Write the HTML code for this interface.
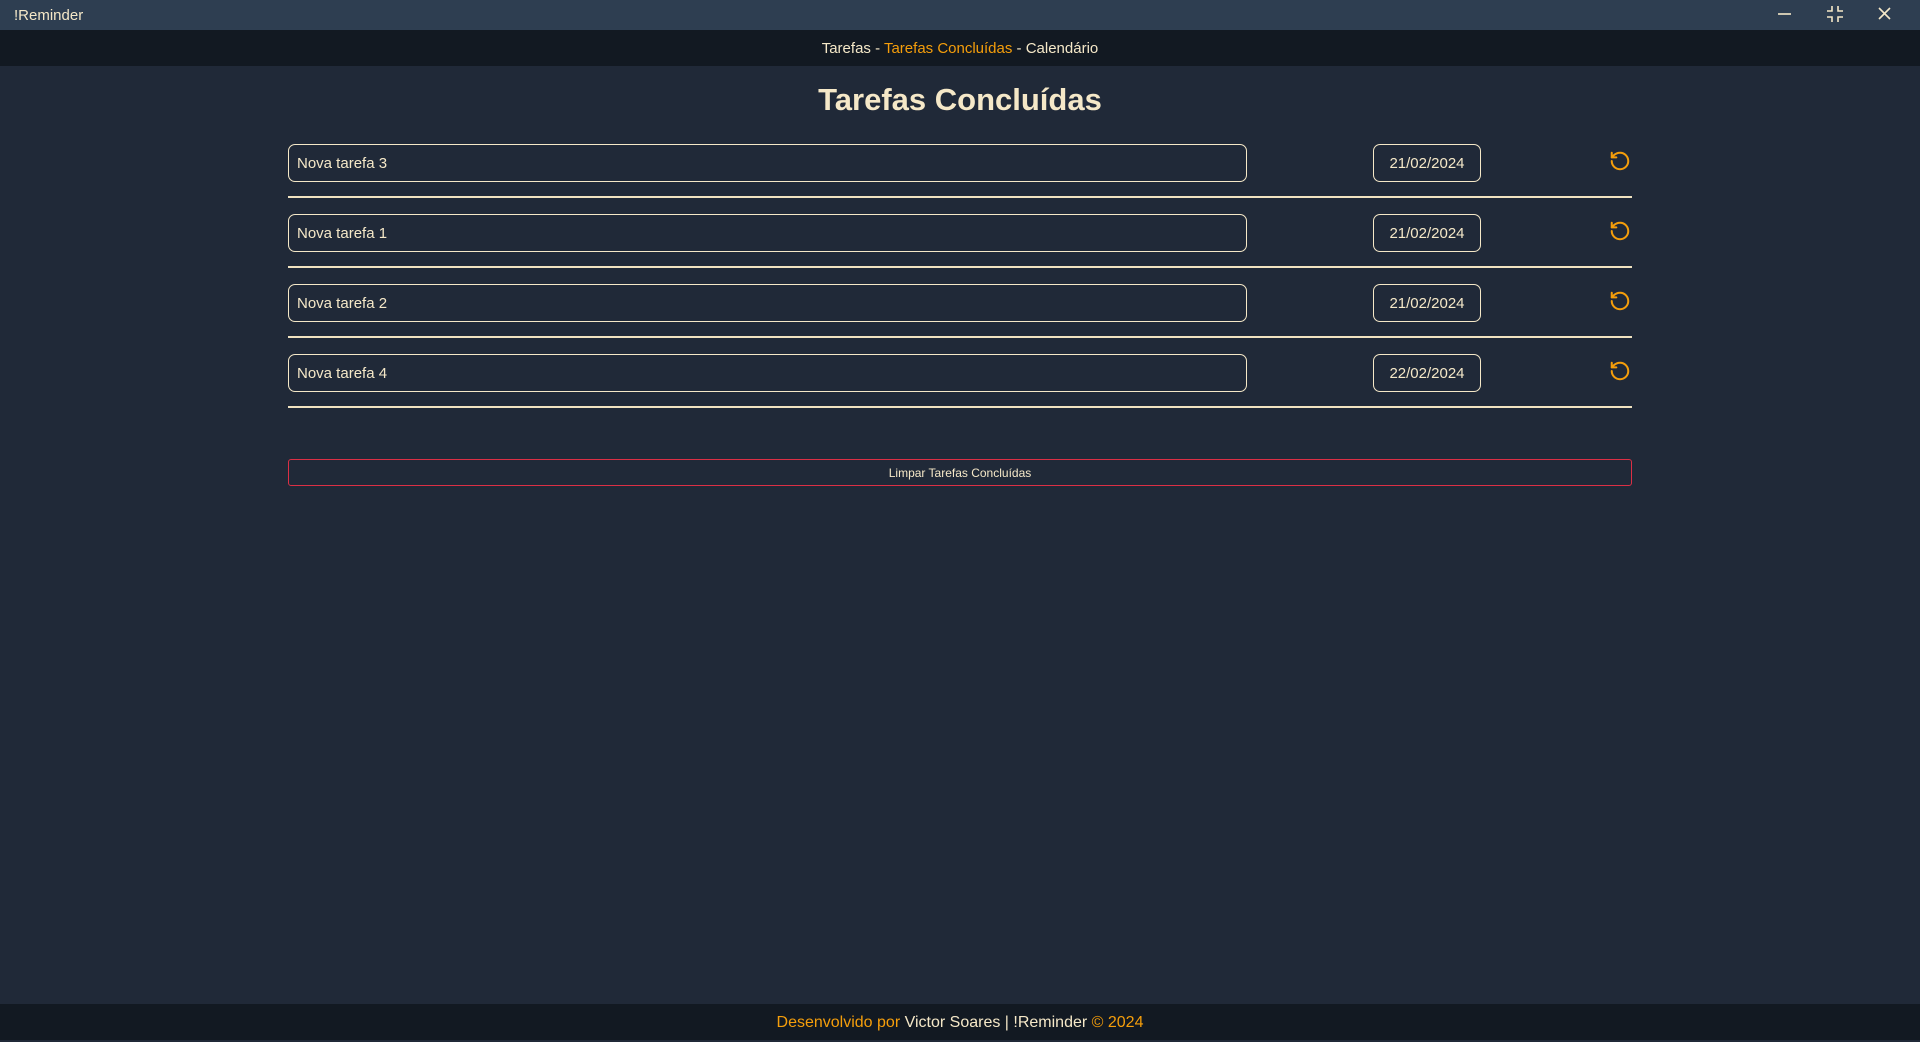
<!DOCTYPE html>
<html><head><meta charset="utf-8"><style>
*{margin:0;padding:0;box-sizing:border-box}
body{width:1920px;height:1040px;background:#202938;font-family:"Liberation Sans",sans-serif;color:#f5e8c8;position:relative;overflow:hidden}
.tb{position:absolute;left:0;top:0;width:1920px;height:30px;background:#2e3e51}
.tb .t{position:absolute;left:14px;top:7px;font-size:15px}
.nav{position:absolute;left:0;top:30px;width:1920px;height:36px;background:#121922;text-align:center;font-size:15px;line-height:38px}
.o{color:#f59e0b}
h1{position:absolute;top:82px;width:1920px;text-align:center;font-size:31px;font-weight:bold}
.in{position:absolute;left:288px;width:959px;height:38px;border:1.5px solid #f5e8c8;border-radius:7px;font-size:15px;line-height:37px;padding-left:8px}
.dt{position:absolute;left:1373px;width:108px;height:38px;border:1.5px solid #f5e8c8;border-radius:7px;font-size:15px;line-height:37px;text-align:center}
.ln{position:absolute;left:288px;width:1344px;height:2px;background:#f0e2c0}
.ic{position:absolute;left:1609px;width:22px;height:22px}
.btn{position:absolute;left:288px;top:459px;width:1344px;height:27px;border:1px solid #dc2f45;border-radius:3px;text-align:center;font-size:12px;line-height:27px}
.ft{position:absolute;left:0;top:1004px;width:1920px;height:36px;background:#121922;text-align:center;font-size:16px;line-height:38px}
</style></head><body>
<div class="tb"><span class="t">!Reminder</span>
<svg style="position:absolute;left:1776px;top:6px" width="18" height="18" viewBox="0 0 18 18" stroke="#f5e8c8" stroke-width="1.6" fill="none"><path d="M2 8h13"/></svg>
<svg style="position:absolute;left:1826px;top:5px" width="18" height="18" viewBox="0 0 18 18" stroke="#f5e8c8" stroke-width="1.6" fill="none"><path d="M6 1v5H1M12 1v5h5M6 17v-5H1M12 17v-5h5"/></svg>
<svg style="position:absolute;left:1876px;top:5px" width="18" height="18" viewBox="0 0 18 18" stroke="#f5e8c8" stroke-width="1.6" fill="none"><path d="M3 3l11 11M14 3L3 14"/></svg>
</div>
<div class="nav">Tarefas - <span class="o">Tarefas Concluídas</span> - Calendário</div>
<h1>Tarefas Concluídas</h1>

<div class="in" style="top:144px">Nova tarefa 3</div><div class="dt" style="top:144px">21/02/2024</div>
<svg class="ic" style="top:150px" viewBox="0 0 24 24" fill="none" stroke="#f59e0b" stroke-width="2.2" stroke-linecap="round" stroke-linejoin="round"><path d="M3 12a9 9 0 1 0 9-9 9.75 9.75 0 0 0-6.74 2.74L3 8"/><path d="M3 3v5h5"/></svg>
<div class="ln" style="top:196px"></div>

<div class="in" style="top:214px">Nova tarefa 1</div><div class="dt" style="top:214px">21/02/2024</div>
<svg class="ic" style="top:220px" viewBox="0 0 24 24" fill="none" stroke="#f59e0b" stroke-width="2.2" stroke-linecap="round" stroke-linejoin="round"><path d="M3 12a9 9 0 1 0 9-9 9.75 9.75 0 0 0-6.74 2.74L3 8"/><path d="M3 3v5h5"/></svg>
<div class="ln" style="top:266px"></div>

<div class="in" style="top:284px">Nova tarefa 2</div><div class="dt" style="top:284px">21/02/2024</div>
<svg class="ic" style="top:290px" viewBox="0 0 24 24" fill="none" stroke="#f59e0b" stroke-width="2.2" stroke-linecap="round" stroke-linejoin="round"><path d="M3 12a9 9 0 1 0 9-9 9.75 9.75 0 0 0-6.74 2.74L3 8"/><path d="M3 3v5h5"/></svg>
<div class="ln" style="top:336px"></div>

<div class="in" style="top:354px">Nova tarefa 4</div><div class="dt" style="top:354px">22/02/2024</div>
<svg class="ic" style="top:360px" viewBox="0 0 24 24" fill="none" stroke="#f59e0b" stroke-width="2.2" stroke-linecap="round" stroke-linejoin="round"><path d="M3 12a9 9 0 1 0 9-9 9.75 9.75 0 0 0-6.74 2.74L3 8"/><path d="M3 3v5h5"/></svg>
<div class="ln" style="top:406px"></div>

<div class="btn">Limpar Tarefas Concluídas</div>
<div class="ft"><span class="o">Desenvolvido por</span> Victor Soares | !Reminder <span class="o">© 2024</span></div>
</body></html>
